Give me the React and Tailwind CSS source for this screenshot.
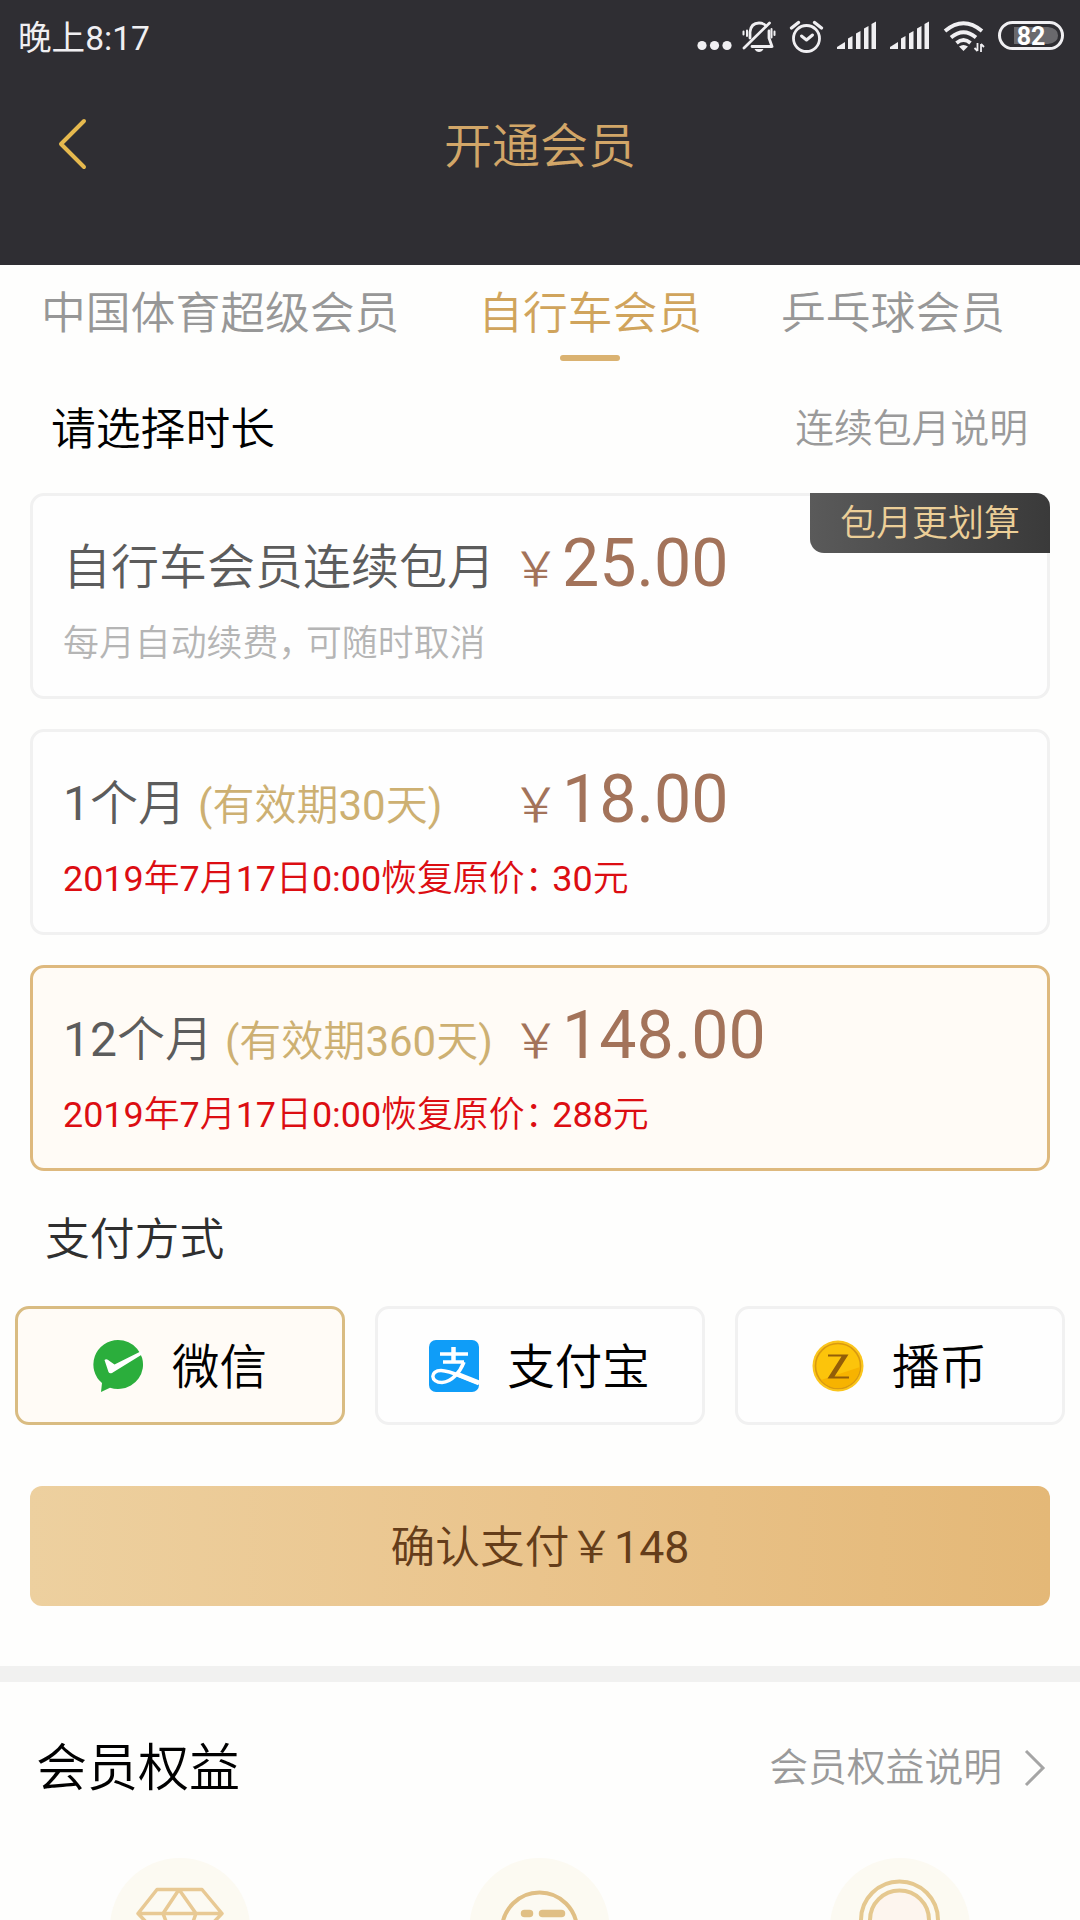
import React from "react";

const roboto = "font-[Roboto,'Noto_Sans_CJK_SC',sans-serif]";

// Latin digits and brackets sit one weight above the light Chinese text.
function Mixed({ text }) {
  return text
    .split(/([0-9:()]+)/)
    .filter(Boolean)
    .map((part, i) =>
      /[0-9:()]/.test(part) ? (
        <span key={i} className="font-normal">{part}</span>
      ) : (
        <React.Fragment key={i}>{part}</React.Fragment>
      )
    );
}

function StatusIcons() {
  return (
    <svg className="h-[40px] w-[368px]" viewBox="696 16 368 40" fill="none">
      <g fill="#f0eff2">
        <circle cx="702" cy="45.500" r="4.600" />
        <circle cx="714.500" cy="45.500" r="4.600" />
        <circle cx="727" cy="45.500" r="4.600" />
      </g>
      <g stroke="#f0eff2" strokeWidth="2.800" strokeLinecap="round" strokeLinejoin="round">
        <path d="M750 38V32Q751 23 759 23Q764 23 766 26M769 31V38L772 46.500H752" />
        <path d="M744 48L769.500 23" />
        <path d="M747 30.500V36M743.500 31.500V34.500M771.500 29V37.500M774.500 31.500V35" strokeWidth="2" />
      </g>
      <path d="M754.500 49h9q-1.500 3-4.500 3t-4.500-3z" fill="#f0eff2" />
      <g stroke="#f0eff2" strokeWidth="3" strokeLinecap="round" strokeLinejoin="round">
        <circle cx="806.500" cy="38.500" r="13" strokeWidth="2.800" />
        <path d="M801.500 36l5 4 6-5" />
        <path d="M791.500 28l7-5.500M821.500 28l-7-5.500" strokeWidth="3.400" />
      </g>
      {[837, 890].map((x) => (
        <g key={x} fill="#f0eff2">
          <path d={`M${x} 49v-2l8-5v7z`} />
          <path d={`M${x + 11} 49V38.500l4.500-2.500v13z`} />
          <path d={`M${x + 19} 49V33.500l4.500-2.500v18z`} />
          <path d={`M${x + 27} 49V28.500l4.500-2.500v23z`} />
          <path d={`M${x + 34.500} 49V24l4.500-2.500V49z`} />
        </g>
      ))}
      <g stroke="#f0eff2" strokeWidth="3.800">
        <path d="M945 31Q963.500 15.500 982 31" />
        <path d="M951 37.500Q963.500 27 976 37.500" />
        <path d="M956.500 43Q963.500 37 970.500 43" />
      </g>
      <path d="M959 46.500q4.500-3 9 0l-4.500 4.500z" fill="#f0eff2" />
      <path d="M977.500 43v8M974.500 48l3 3M981 52v-8M984 47l-3-3" stroke="#f0eff2" strokeWidth="1.800" />
      <rect x="999.500" y="22.500" width="63" height="26" rx="13" stroke="#f0eff2" strokeWidth="3" />
      <path d="M1014 27h34q10 1 10 8.500t-10 8.500h-34z" fill="#6a696d" />
      <text x="1031" y="44.500" textAnchor="middle" fill="#fff" className="font-[Roboto,sans-serif] text-[25px] font-bold">82</text>
    </svg>
  );
}

function Price({ value }) {
  return (
    <div className="flex items-baseline text-[#a3735a]">
      <span className="-ml-[8px] w-[50px] text-[47.500px]">￥</span>
      <span className="text-[66.300px] leading-none font-normal">{value}</span>
    </div>
  );
}

function Plan({ title, note, price, children, selected, badge }) {
  return (
    <section
      className={
        "relative h-[206px] rounded-[14px] border-[3px] pl-[30px] " +
        (selected ? "border-[#deb97e] bg-[#fffbf6]" : "border-[#f1f1f1] bg-[#fefefe]")
      }
    >
      <div className="flex h-[134px] items-center">
        <div className="flex w-[457px] items-baseline pt-[10px] whitespace-nowrap text-[48px] text-[#5c5c5c]">
          <span><Mixed text={title} /></span>
          {note && <span className="ml-[12px] text-[42px] text-[#cdb072]"><Mixed text={note} /></span>}
        </div>
        <Price value={price} />
      </div>
      <div className="-mt-[9px] flex h-[46px] items-center whitespace-nowrap">{children}</div>
      {badge && (
        <div className="absolute -top-[3px] -right-[3px] flex h-[60px] w-[240px] items-center justify-center rounded-tr-[14px] rounded-bl-[14px] bg-linear-to-r from-[#5a5a5a] to-[#3a3a3a] pt-[2px] text-[36px] text-[#eccf98]">
          {badge}
        </div>
      )}
    </section>
  );
}

function Restore({ amount }) {
  return (
    <p className="text-[35.900px] text-[#dc0d12]">
      <Mixed text="2019年7月17日0:00恢复原价" />
      <span className="tracking-[-0.23em]">：</span>
      <Mixed text={amount + "元"} />
    </p>
  );
}

function WechatIcon() {
  return (
    <svg className="h-[54px] w-[52px]" viewBox="0 0 52 54">
      <path d="M26 1a25 24.500 0 1 1-8 47.700L9 53l1-9A25 24.500 0 0 1 26 1z" fill="#2bae3c" />
      <path d="M12.500 21q2-2 5 1l5 3.500L49.500 12q2 1.500.5 3.500L20 34q-2.500 1-3.500-1z" fill="#fff" />
    </svg>
  );
}

function AlipayIcon() {
  return (
    <svg className="h-[52px] w-[50px]" viewBox="0 0 50 52" fill="none">
      <rect width="50" height="52" rx="7" fill="#0f9df8" />
      <g stroke="#fff">
        <path d="M24.500 7v15" strokeWidth="4.500" />
        <path d="M11 14h28M14 22h21" strokeWidth="3.500" />
        <path d="M35 22C31 32 23 42 13 42.500C1 42.500 1 30.500 12 30.500C22 30.500 34 38 50 43" strokeWidth="3.500" />
        <path d="M29 34.500L50 43" strokeWidth="5" />
      </g>
    </svg>
  );
}

function CoinIcon() {
  return (
    <svg className="h-[52px] w-[52px]" viewBox="0 0 52 52">
      <circle cx="26" cy="26" r="25.500" fill="#fbc51b" />
      <circle cx="26" cy="26" r="22.500" fill="#fcc40b" stroke="#d99a10" strokeWidth="1.600" />
      <path d="M48 27A22 22 0 0 1 9 40z" fill="#f7b300" />
      <path d="M16 14.500h20.500L22.500 36.500H37v2H15.500L29.500 16.500H16z" fill="#935e08" />
    </svg>
  );
}

function Pay({ icon, label, selected }) {
  return (
    <button
      className={
        "flex h-[119px] items-center justify-center gap-[28px] rounded-[14px] border-[3px] pt-[1px] pr-[1px] text-[47.500px] text-black " +
        (selected ? "border-[#d9bc82] bg-[#fffbf6]" : "border-[#f1f1f1] bg-[#fefefe]")
      }
    >
      {icon}
      <span className="pt-[5px]">{label}</span>
    </button>
  );
}

function Benefits() {
  return (
    <div className="flex h-[65px] justify-between overflow-hidden px-[108px]">
      <svg className="h-[144px] w-[144px] shrink-0" viewBox="0 0 144 144" fill="none">
        <circle cx="72" cy="73" r="70" fill="#fcfaf2" />
        <path d="M49 34.500h45l20 24-42 44-42-44zM30 58.500h84M71 34.500L55 58.500l17 44 16-44z" stroke="#e8c994" strokeWidth="3.500" strokeLinejoin="round" />
      </svg>
      <svg className="h-[144px] w-[144px] shrink-0" viewBox="0 0 144 144" fill="none">
        <circle cx="71.500" cy="73" r="70" fill="#fcfaf2" />
        <circle cx="71.500" cy="75" r="37.500" stroke="#e0bf85" strokeWidth="4" />
        <path d="M56.500 58.500h5M74.500 58.500h19" stroke="#e0bf85" strokeWidth="7.500" strokeLinecap="round" />
      </svg>
      <svg className="h-[144px] w-[144px] shrink-0" viewBox="0 0 144 144" fill="none">
        <circle cx="72" cy="73" r="70" fill="#fcfaf2" />
        <circle cx="71.500" cy="65" r="38.500" stroke="#e5c88f" strokeWidth="4" />
        <circle cx="71.500" cy="65" r="29.500" fill="#fdf5ee" stroke="#e5c88f" strokeWidth="4" />
      </svg>
    </div>
  );
}

export default function App() {
  return (
    <main className={"h-[1920px] w-[1080px] overflow-hidden bg-[#fefefd] font-[350] leading-none " + roboto}>
      <header className="h-[265px] bg-[#2f2e33]">
        <div className="flex h-[72px] items-center justify-between pr-[16px] pl-[18px]">
          <span className="pt-[5px] text-[33.600px] font-normal text-[#f0eff2]">晚上8:17</span>
          <StatusIcons />
        </div>
        <div className="grid h-[144px] grid-cols-[1fr_auto_1fr] items-center">
          <svg className="ml-[56px] h-[52px] w-[34px]" viewBox="0 0 34 52" fill="none">
            <path d="M28 3L5 26l23 23" stroke="#e6b94e" strokeWidth="4" strokeLinecap="round" strokeLinejoin="round" />
          </svg>
          <h1 className="pt-[5px] text-[48px] text-[#d2a668]">开通会员</h1>
        </div>
      </header>

      <nav className="flex h-[100px] justify-between pt-[27px] pr-[75px] pl-[41px] text-[44.800px] text-[#979797]">
        <span>中国体育超级会员</span>
        <span className="flex flex-col items-center text-[#d0a45c]">
          自行车会员
          <i className="mt-[18px] h-[6px] w-[60px] rounded-full bg-[#dab271]" />
        </span>
        <span>乒乓球会员</span>
      </nav>

      <div className="flex h-[128px] items-center justify-between pr-[52px] pl-[51px]">
        <h2 className="pt-[2px] text-[44.800px] text-black">请选择时长</h2>
        <span className="text-[38.800px] text-[#9a9a9a]">连续包月说明</span>
      </div>

      <div className="flex flex-col gap-[30px] px-[30px]">
        <Plan title="自行车会员连续包月" price="25.00" badge="包月更划算">
          <p className="pt-[1px] text-[35.900px] text-[#b5b5b5]">
            每月自动续费<span className="tracking-[-0.23em]">，</span>可随时取消
          </p>
        </Plan>
        <Plan title="1个月" note="(有效期30天)" price="18.00">
          <Restore amount="30" />
        </Plan>
        <Plan title="12个月" note="(有效期360天)" price="148.00" selected>
          <Restore amount="288" />
        </Plan>
      </div>

      <h2 className="flex h-[135px] items-center pt-[4px] pl-[45px] text-[44.800px] text-[#2f2f2f]">支付方式</h2>

      <div className="grid grid-cols-3 gap-[30px] px-[15px]">
        <Pay icon={<WechatIcon />} label="微信" selected />
        <Pay icon={<AlipayIcon />} label="支付宝" />
        <Pay icon={<CoinIcon />} label="播币" />
      </div>

      <button className="mt-[61px] ml-[30px] flex h-[120px] w-[1020px] items-center justify-center rounded-[12px] bg-linear-to-r from-[#edd09f] via-[#eac48c] to-[#e4b877] pt-[4px] text-[44.700px] text-[#643d1a]">
        <span><Mixed text="确认支付￥148" /></span>
      </button>

      <div className="mt-[60px] h-[16px] bg-[#f1f1f0]" />

      <div className="flex h-[173px] items-center justify-between pr-[34px] pl-[36px]">
        <h2 className="text-[51px] text-black">会员权益</h2>
        <div className="flex items-center gap-[22px] text-[38.800px] text-[#9a9a9a]">
          会员权益说明
          <svg className="h-[40px] w-[22px]" viewBox="0 0 22 40" fill="none">
            <path d="M2 2l17 17L2 36" stroke="#a5a5a5" strokeWidth="3" />
          </svg>
        </div>
      </div>
      <Benefits />
    </main>
  );
}
